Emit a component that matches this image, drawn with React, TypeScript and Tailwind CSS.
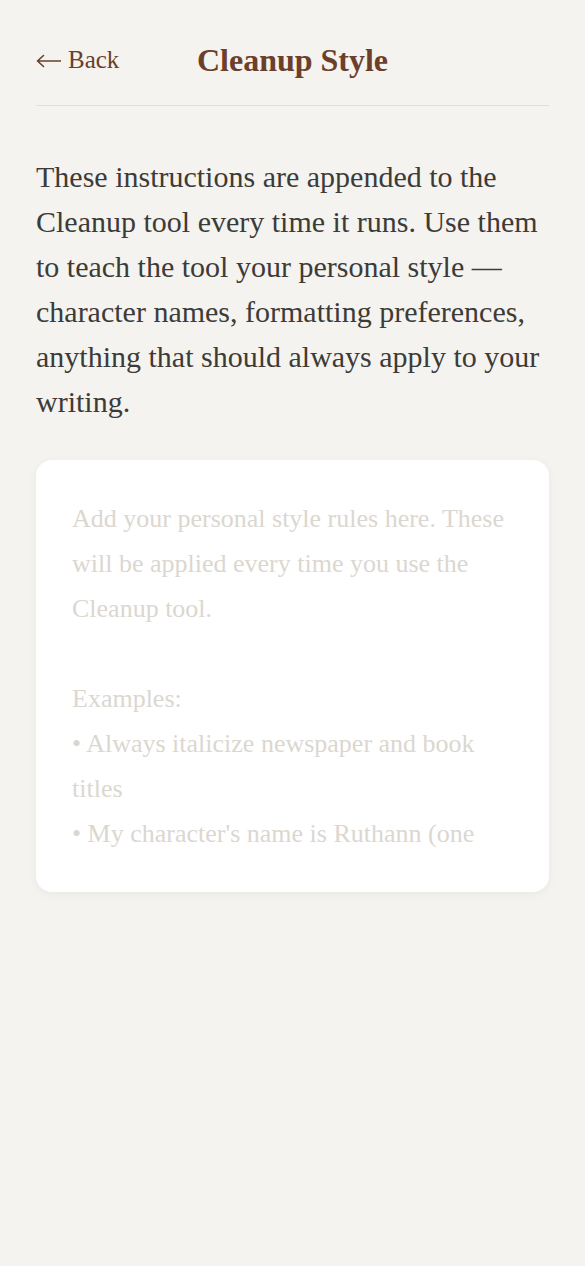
import { useState } from "react";

const PLACEHOLDER = `Add your personal style rules here. These will be applied every time you use the Cleanup tool.

Examples:
• Always italicize newspaper and book titles
• My character's name is Ruthann (one word), not Ruth Ann
• Use em dashes without spaces`;

export default function App() {
  const [rules, setRules] = useState("");

  return (
    <div
      className="min-h-[1266px] bg-[#f4f3ef] px-9 pt-9"
      style={{ fontFamily: '"Liberation Serif", "DejaVu Serif", serif' }}
    >
      {/* Header */}
      <header className="grid grid-cols-[1fr_auto_1fr] items-center border-b border-[#e2dfd9] pb-[21px]">
        <button className="flex items-center gap-[7px] justify-self-start text-[25px] text-[#6b3f2b]">
          <svg width="25" height="14" viewBox="0 0 25 14" fill="none" className="mt-[2px]">
            <path d="M24.5 7H1.5M1.5 7L7.5 1.5M1.5 7L7.5 12.5" stroke="currentColor" strokeWidth="1.6" strokeLinecap="round" />
          </svg>
          Back
        </button>
        <h1 className="text-[32px] font-bold text-[#6b3f2b]">Cleanup Style</h1>
        <div />
      </header>

      <p className="mt-[48px] text-[30px] leading-[45px] text-[#3d3b38]">
        These instructions are appended to the Cleanup tool every time it runs. Use them to teach the
        tool your personal style — character names, formatting preferences, anything that should
        always apply to your writing.
      </p>

      <div className="mt-[36px] rounded-2xl bg-white p-9 shadow-[0_2px_10px_rgba(0,0,0,0.05)]">
        <textarea
          value={rules}
          onChange={(e) => setRules(e.target.value)}
          placeholder={PLACEHOLDER}
          className="block h-[360px] w-full resize-none overflow-hidden bg-transparent text-[26px] leading-[45px] text-[#3d3b38] outline-none placeholder:text-[#dbd7d0]"
          style={{ fontFamily: "inherit" }}
        />
      </div>
    </div>
  );
}
